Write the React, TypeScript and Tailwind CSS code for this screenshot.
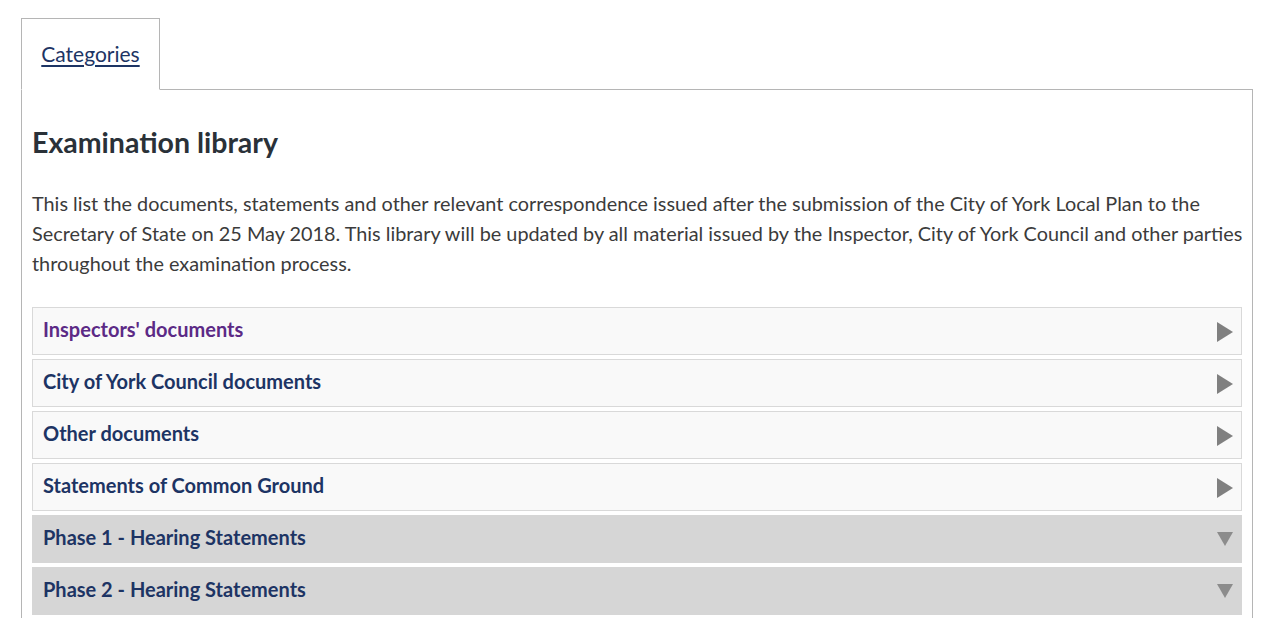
const items = [
  { title: "Inspectors' documents", visited: true, open: false },
  { title: "City of York Council documents", visited: false, open: false },
  { title: "Other documents", visited: false, open: false },
  { title: "Statements of Common Ground", visited: false, open: false },
  { title: "Phase 1 - Hearing Statements", visited: false, open: true },
  { title: "Phase 2 - Hearing Statements", visited: false, open: true },
]

function Arrow({ open }: { open: boolean }) {
  if (open) {
    return (
      <svg width="16" height="14" viewBox="0 0 16 14" className="shrink-0">
        <path d="M0 0 H16 L8 14 Z" fill="#8c8c8c" />
      </svg>
    )
  }
  return (
    <svg width="16" height="20" viewBox="0 0 16 20" className="shrink-0">
      <path d="M0 0 L16 10 L0 20 Z" fill="#808080" />
    </svg>
  )
}

export default function App() {
  return (
    <div className="min-h-screen bg-white pl-[21px] pr-[24px] pt-[18px] font-['Lato',sans-serif] text-[#333]">
      <div className="relative z-10 -mb-px flex">
        <div className="flex h-[72px] w-[139px] items-center justify-center border border-b-white border-[#b5b5b5] bg-white pb-[2px]">
          <a href="#" className="text-[21px] leading-none text-[#1d3464] underline underline-offset-[3px]">
            Categories
          </a>
        </div>
      </div>
      <div className="border border-[#b5b5b5] px-[10px] pb-10 pt-[35px]">
        <h2 className="text-[28.5px] font-bold leading-[34px] text-[#2a3138]">Examination library</h2>
        <p className="-mr-[8px] mt-[29px] text-[19.85px] leading-[30px] text-[#3b3b3b]">
          This list the documents, statements and other relevant correspondence issued after the submission of the City of York Local Plan to the Secretary of State on 25 May 2018. This library will be updated by all material issued by the Inspector, City of York Council and other parties throughout the examination process.
        </p>
        <div className="mt-[29px] flex flex-col gap-[4px]">
          {items.map((it) => (
            <div
              key={it.title}
              className={
                it.open
                  ? "flex h-[48px] items-center justify-between border border-[#d6d6d6] bg-[#d6d6d6] pb-[5px] pl-[10px] pr-[8px]"
                  : "flex h-[48px] items-center justify-between border border-[#d9d9d9] bg-[#f9f9f9] pb-[5px] pl-[10px] pr-[8px]"
              }
            >
              <span
                className={
                  it.visited
                    ? "text-[20px] font-bold text-[#5c2a86]"
                    : "text-[20px] font-bold text-[#1d3464]"
                }
              >
                {it.title}
              </span>
              <span className={it.open ? "pt-[5px]" : "pt-[7px]"}>
                <Arrow open={it.open} />
              </span>
            </div>
          ))}
        </div>
      </div>
    </div>
  )
}
